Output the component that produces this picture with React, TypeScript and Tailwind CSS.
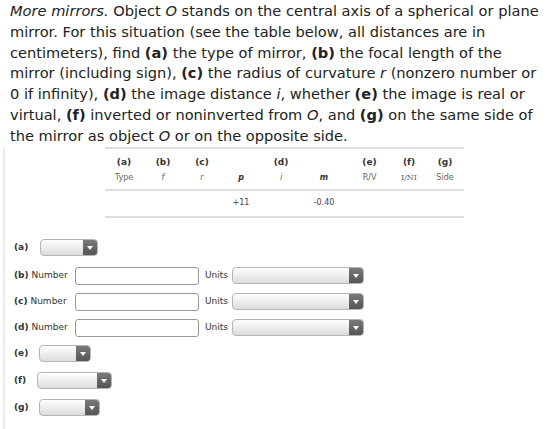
import React from 'react';

const font = { fontFamily: '"DejaVu Sans", Verdana, sans-serif' };

function Select({ width }: { width: number }) {
  return (
    <div
      className="flex h-[17px] rounded-[4px] border border-[#b5b5b5] overflow-hidden bg-gradient-to-b from-white to-[#dcdcdc]"
      style={{ width }}
    >
      <div className="flex-1" />
      <div className="w-[14px] bg-gradient-to-b from-[#7a7a7a] to-[#555] flex items-center justify-center">
        <div className="w-0 h-0 border-l-[3px] border-r-[3px] border-t-[4px] border-l-transparent border-r-transparent border-t-white" />
      </div>
    </div>
  );
}

const cols = [
  { w: 38, top: '(a)', sub: 'Type', subCls: 'text-[#666]', val: '' },
  { w: 40, top: '(b)', sub: 'f', subCls: 'italic text-[#666]', val: '' },
  { w: 38, top: '(c)', sub: 'r', subCls: 'italic text-[#666]', val: '' },
  { w: 40, top: '', sub: 'p', subCls: 'italic font-bold text-[#333]', val: '+11' },
  { w: 40, top: '(d)', sub: 'i', subCls: 'italic text-[#666]', val: '' },
  { w: 46, top: '', sub: 'm', subCls: 'italic font-bold text-[#333]', val: '-0.40' },
  { w: 45, top: '(e)', sub: 'R/V', subCls: 'text-[#666]', val: '' },
  { w: 34, top: '(f)', sub: 'I/NI', subCls: 'text-[#666] font-["DejaVu_Serif"]', val: '' },
  { w: 38, top: '(g)', sub: 'Side', subCls: 'text-[#666]', val: '' },
];

function NumberRow({ label }: { label: string }) {
  return (
    <div className="flex items-center h-[26px]">
      <span className="text-[9px] text-[#333] w-[61px] whitespace-nowrap">
        <b>{label}</b> Number
      </span>
      <div className="w-[124px] h-[18px] border border-[#999] rounded-[3px] bg-white" />
      <span className="text-[9px] text-[#333] ml-[6px] w-[27px]">Units</span>
      <Select width={132} />
    </div>
  );
}

function SelRow({ label, width, gap }: { label: string; width: number; gap: number }) {
  return (
    <div className="flex items-center h-[26px]">
      <span className="text-[9px] font-bold text-[#333]" style={{ width: gap }}>
        {label}
      </span>
      <Select width={width} />
    </div>
  );
}

export default function App() {
  return (
    <div className="w-[560px] h-[429px] bg-white overflow-hidden text-[#222]" style={font}>
      <p className="pl-[10px] pt-[1px] text-[14.6px] leading-[20.8px] text-[#222] whitespace-nowrap">
        <i>More mirrors.</i> Object <i>O</i> stands on the central axis of a spherical or plane
        <br />
        mirror. For this situation (see the table below, all distances are in
        <br />
        centimeters), find <b>(a)</b> the type of mirror, <b>(b)</b> the focal length of the
        <br />
        mirror (including sign), <b>(c)</b> the radius of curvature <i>r</i> (nonzero number or
        <br />0 if infinity), <b>(d)</b> the image distance <i>i</i>, whether <b>(e)</b> the image
        is real or
        <br />
        virtual, <b>(f)</b> inverted or noninverted from <i>O</i>, and <b>(g)</b> on the same side
        of
        <br />
        the mirror as object <i>O</i> or on the opposite side.
      </p>

      <div className="ml-[3px] border-l-2 border-[#ececec] pl-[9px]">
        <div className="ml-[91px] w-[359px]">
          <div className="border-t-2 border-[#dedede] flex h-[42px]">
            {cols.map((c, i) => (
              <div key={i} className="flex flex-col items-center" style={{ width: c.w }}>
                <span className="text-[9px] font-bold text-[#333] h-[14px] mt-[6px] leading-[14px]">
                  {c.top}
                </span>
                <span className={`text-[8px] leading-[14px] mt-[2px] ${c.subCls}`}>{c.sub}</span>
              </div>
            ))}
          </div>
          <div className="border-t-2 border-[#dedede] flex h-[27px] items-center">
            {cols.map((c, i) => (
              <div key={i} className="text-center text-[8px] text-[#444]" style={{ width: c.w }}>
                {c.val}
              </div>
            ))}
          </div>
          <div className="border-t-2 border-[#dedede]" />
        </div>

        <div className="pt-[17px] pb-[20px]">
          <SelRow label="(a)" width={58} gap={26} />
          <div className="h-[2px]" />
          <NumberRow label="(b)" />
          <NumberRow label="(c)" />
          <NumberRow label="(d)" />
          <SelRow label="(e)" width={52} gap={25} />
          <div className="h-[1px]" />
          <SelRow label="(f)" width={75} gap={23} />
          <div className="h-[1px]" />
          <SelRow label="(g)" width={61} gap={25} />
        </div>
      </div>
    </div>
  );
}
